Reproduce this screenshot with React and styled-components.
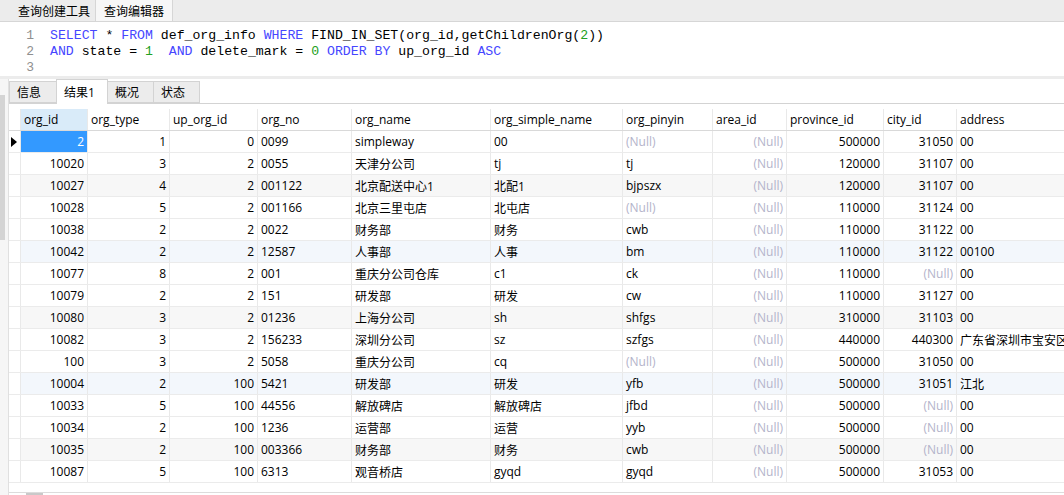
import React from 'react';
import styled, { createGlobalStyle } from 'styled-components';

const UI_FONT = `"Open Sans", "Noto Sans CJK SC", sans-serif`;
const MONO_FONT = `"Liberation Mono", "Noto Sans CJK SC", monospace`;

const GlobalStyle = createGlobalStyle`
  html, body {
    margin: 0;
    padding: 0;
    background: #ffffff;
    overflow: hidden;
  }
  #root {
    width: 1064px;
    height: 495px;
  }
`;

const Window = styled.div`
  width: 1064px;
  height: 495px;
  display: flex;
  flex-direction: column;
  overflow: hidden;
  font-family: ${UI_FONT};
  font-size: 12px;
  color: #000;
`;

const TopTabs = styled.div`
  height: 21px;
  display: flex;
  align-items: stretch;
  padding-left: 13px;
  background: #ececec;
  border-bottom: 1px solid #d6d6d6;
`;

const TopTab = styled.div`
  display: flex;
  align-items: center;
  padding: 0 ${({ $active }) => ($active ? '8px' : '4px')};
  background: ${({ $active }) => ($active ? '#f7f7f7' : 'transparent')};
  border-left: 1px solid ${({ $active }) => ($active ? '#d6d6d6' : 'transparent')};
  border-right: 1px solid ${({ $active }) => ($active ? '#d6d6d6' : 'transparent')};
  white-space: nowrap;
`;

const Editor = styled.div`
  height: 54px;
  display: flex;
  padding-top: 6px;
  box-sizing: border-box;
  background: #ffffff;
`;

const Gutter = styled.div`
  width: 34px;
  text-align: right;
  font-family: ${MONO_FONT};
  font-size: 13px;
  line-height: 16px;
  color: #8f8f8f;
`;

const Code = styled.pre`
  margin: 0 0 0 16px;
  font-family: ${MONO_FONT};
  font-size: 13.2px;
  line-height: 16px;
  color: #000;
`;

const Kw = styled.span`
  color: #4646ff;
`;

const Num = styled.span`
  color: #22a022;
`;

const Splitter = styled.div`
  height: 3px;
  background: #ececec;
`;

const Body = styled.div`
  flex: 1;
  display: flex;
  min-height: 0;
`;

const SideTrack = styled.div`
  width: 8px;
  flex-shrink: 0;
  display: flex;
  flex-direction: column;
  background: #f6f6f6;
  border-right: 1px solid #e0e0e0;
`;

const SideThumb = styled.div`
  margin-top: 16px;
  width: 5px;
  height: 145px;
  background: #d4d4d4;
`;

const Main = styled.div`
  flex: 1;
  display: flex;
  flex-direction: column;
  min-width: 0;
`;

const ResultTabs = styled.div`
  height: 25px;
  display: flex;
  align-items: flex-end;
  padding-left: 1px;
  border-bottom: 1px solid #d3d3d3;
  box-sizing: border-box;
`;

const ResultTab = styled.div`
  width: ${({ $w }) => $w}px;
  height: ${({ $active }) => ($active ? '25px' : '22px')};
  margin-bottom: ${({ $active }) => ($active ? '-1px' : '0')};
  box-sizing: border-box;
  display: flex;
  align-items: center;
  padding-left: 7px;
  background: ${({ $active }) => ($active ? '#ffffff' : '#ececec')};
  border: 1px solid #d3d3d3;
  border-bottom: ${({ $active }) => ($active ? 'none' : '1px solid #d3d3d3')};
  margin-left: -1px;
  white-space: nowrap;
`;

const Grid = styled.div`
  flex: 1;
  padding-top: 5px;
  overflow: hidden;
  display: flex;
  flex-direction: column;
`;

const Row = styled.div`
  display: flex;
  height: 22px;
  flex-shrink: 0;
  background: ${({ $tone }) =>
    $tone === 'gray' ? '#f7f7f7' : $tone === 'blue' ? '#f3f7fc' : '#ffffff'};
  border-bottom: 1px solid ${({ $header }) => ($header ? '#d9d9d9' : '#ebebeb')};
  box-sizing: border-box;
`;

const Cell = styled.div`
  width: ${({ $w }) => $w}px;
  flex-shrink: 0;
  box-sizing: border-box;
  padding: 0 3px;
  display: flex;
  align-items: center;
  justify-content: ${({ $align }) => ($align === 'right' ? 'flex-end' : 'flex-start')};
  border-right: 1px solid #e9e9e9;
  white-space: nowrap;
  overflow: hidden;
  background: ${({ $selected, $headSel }) =>
    $selected ? '#3399ff' : $headSel ? '#d9ebf9' : 'transparent'};
  color: ${({ $selected, $null }) => ($selected ? '#ffffff' : $null ? '#b3b3ca' : '#000000')};
`;

const Marker = styled.div`
  width: 12px;
  flex-shrink: 0;
  box-sizing: border-box;
  border-right: 1px solid #e9e9e9;
  background: #ffffff;
  display: flex;
  align-items: center;
  padding-left: 2px;
`;

const Triangle = styled.div`
  width: 0;
  height: 0;
  border-top: 5px solid transparent;
  border-bottom: 5px solid transparent;
  border-left: 6px solid #000;
`;

const Filler = styled.div`
  flex: 1;
`;

const HScroll = styled.div`
  height: 2px;
  border-top: 1px solid #dcdcdc;
  display: flex;
  padding-left: 17px;
`;

const HThumb = styled.div`
  width: 17px;
  background: #c9c9c9;
`;

const columns = [
  { key: 'org_id', width: 67, align: 'right' },
  { key: 'org_type', width: 82, align: 'right' },
  { key: 'up_org_id', width: 88, align: 'right' },
  { key: 'org_no', width: 94, align: 'left' },
  { key: 'org_name', width: 139, align: 'left' },
  { key: 'org_simple_name', width: 132, align: 'left' },
  { key: 'org_pinyin', width: 90, align: 'left' },
  { key: 'area_id', width: 74, align: 'right' },
  { key: 'province_id', width: 97, align: 'right' },
  { key: 'city_id', width: 73, align: 'right' },
  { key: 'address', width: 160, align: 'left' },
];

const N = null;

const rows = [
  ['2', '1', '0', '0099', 'simpleway', '00', N, N, '500000', '31050', '00'],
  ['10020', '3', '2', '0055', '天津分公司', 'tj', 'tj', N, '120000', '31107', '00'],
  ['10027', '4', '2', '001122', '北京配送中心1', '北配1', 'bjpszx', N, '120000', '31107', '00'],
  ['10028', '5', '2', '001166', '北京三里屯店', '北屯店', N, N, '110000', '31124', '00'],
  ['10038', '2', '2', '0022', '财务部', '财务', 'cwb', N, '110000', '31122', '00'],
  ['10042', '2', '2', '12587', '人事部', '人事', 'bm', N, '110000', '31122', '00100'],
  ['10077', '8', '2', '001', '重庆分公司仓库', 'c1', 'ck', N, '110000', N, '00'],
  ['10079', '2', '2', '151', '研发部', '研发', 'cw', N, '110000', '31127', '00'],
  ['10080', '3', '2', '01236', '上海分公司', 'sh', 'shfgs', N, '310000', '31103', '00'],
  ['10082', '3', '2', '156233', '深圳分公司', 'sz', 'szfgs', N, '440000', '440300', '广东省深圳市宝安区'],
  ['100', '3', '2', '5058', '重庆分公司', 'cq', N, N, '500000', '31050', '00'],
  ['10004', '2', '100', '5421', '研发部', '研发', 'yfb', N, '500000', '31051', '江北'],
  ['10033', '5', '100', '44556', '解放碑店', '解放碑店', 'jfbd', N, '500000', N, '00'],
  ['10034', '2', '100', '1236', '运营部', '运营', 'yyb', N, '500000', N, '00'],
  ['10035', '2', '100', '003366', '财务部', '财务', 'cwb', N, '500000', N, '00'],
  ['10087', '5', '100', '6313', '观音桥店', 'gyqd', 'gyqd', N, '500000', '31053', '00'],
];

const toneFor = (i) => {
  if (i % 6 === 2) return 'gray';
  if (i % 6 === 5) return 'blue';
  return 'plain';
};

const resultTabs = [
  { label: '信息', width: 48 },
  { label: '结果1', width: 52, active: true },
  { label: '概况', width: 47 },
  { label: '状态', width: 47 },
];

const App = () => {
  return (
    <>
      <GlobalStyle />
      <Window>
        <TopTabs>
          <TopTab>查询创建工具</TopTab>
          <TopTab $active>查询编辑器</TopTab>
        </TopTabs>

        <Editor>
          <Gutter>
            <div>1</div>
            <div>2</div>
            <div>3</div>
          </Gutter>
          <Code>
            <Kw>SELECT</Kw> * <Kw>FROM</Kw> def_org_info <Kw>WHERE</Kw> FIND_IN_SET(org_id,getChildrenOrg(<Num>2</Num>)){'\n'}
            <Kw>AND</Kw> state = <Num>1</Num>  <Kw>AND</Kw> delete_mark = <Num>0</Num> <Kw>ORDER BY</Kw> up_org_id <Kw>ASC</Kw>{'\n'}
          </Code>
        </Editor>

        <Splitter />

        <Body>
          <SideTrack>
            <SideThumb />
          </SideTrack>
          <Main>
            <ResultTabs>
              {resultTabs.map((tab) => (
                <ResultTab key={tab.label} $w={tab.width} $active={tab.active}>
                  {tab.label}
                </ResultTab>
              ))}
            </ResultTabs>

            <Grid>
              <Row $header>
                <Marker />
                {columns.map((col, i) => (
                  <Cell key={col.key} $w={col.width} $headSel={i === 0}>
                    {col.key}
                  </Cell>
                ))}
              </Row>
              {rows.map((row, r) => (
                <Row key={r} $tone={toneFor(r)}>
                  <Marker>{r === 0 && <Triangle />}</Marker>
                  {columns.map((col, c) => (
                    <Cell
                      key={col.key}
                      $w={col.width}
                      $align={col.align}
                      $null={row[c] === null}
                      $selected={r === 0 && c === 0}
                    >
                      {row[c] === null ? '(Null)' : row[c]}
                    </Cell>
                  ))}
                </Row>
              ))}
              <Filler />
              <HScroll>
                <HThumb />
              </HScroll>
            </Grid>
          </Main>
        </Body>
      </Window>
    </>
  );
};

export default App;
